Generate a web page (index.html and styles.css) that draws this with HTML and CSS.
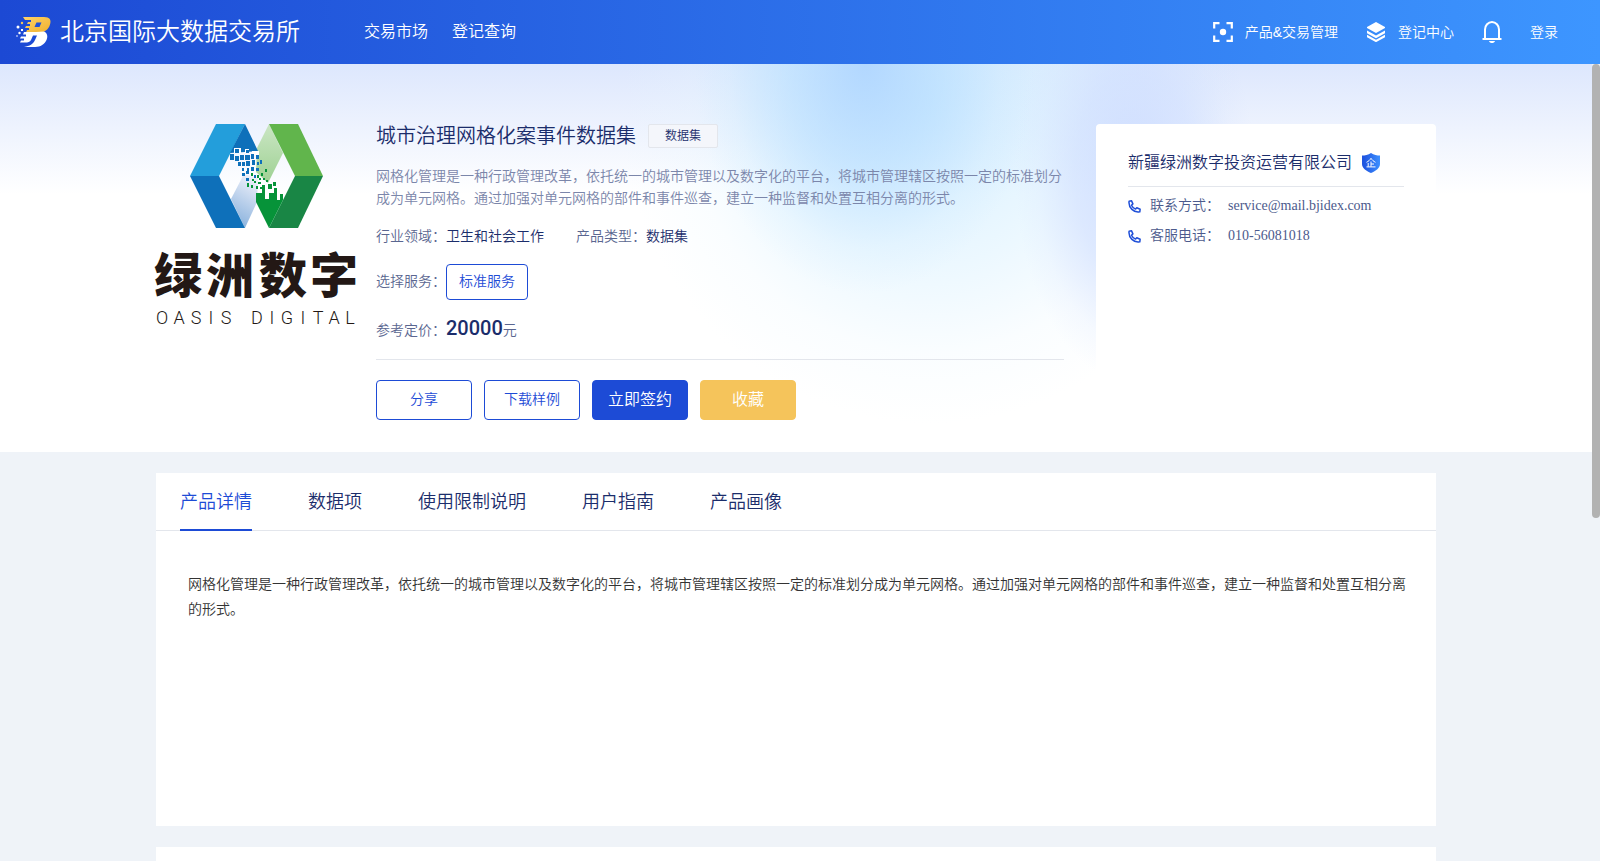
FILE: index.html
```html
<!DOCTYPE html>
<html lang="zh-CN">
<head>
<meta charset="utf-8">
<title>北京国际大数据交易所</title>
<link rel="stylesheet" href="styles.css">
</head>
<body>
<header class="topbar">
  <a class="brand" href="#">
    <svg class="brand-mark" viewBox="0 0 36 32" aria-hidden="true">
      <defs><linearGradient id="gold" x1="0" y1="0" x2="1" y2="1"><stop offset="0" stop-color="#ffd36a"/><stop offset="1" stop-color="#f0b02c"/></linearGradient></defs>
      <path fill="url(#gold)" d="M7 1h21c6 0 7.500 3 6 7.500C32.500 14 28 16.500 23 16.500H10l1-2.500h2v-2H9l1-2h4V8h-3l1-2h3V4H9z"/>
      <path fill="#2152d8" d="M20.500 6.500h5L23.500 11h-5z"/>
      <path fill="#fff" d="M28 15.500c4 2 4 6 2 9.500-3 5-7 6-13 6H8c6-1 9-3 11-7l2-4.500h-4L15 24c-1 2-3 2.500-6 2.500H4l1-2h3v-2H4l1-2h5v-2H7l1-2.500h12z"/>
      <g fill="#fff"><circle cx="2" cy="11" r="1.500"/><circle cx="3.500" cy="17" r="1.200"/><rect x="5" y="13" width="2" height="2"/><circle cx="1" cy="20" r=".8"/></g>
      <circle cx="6" cy="7" r="1.200" fill="#f5c45b"/>
    </svg>
    <span class="brand-name">北京国际大数据交易所</span>
  </a>
  <nav class="main-nav">
    <a href="#">交易市场</a>
    <a href="#">登记查询</a>
  </nav>
  <div class="tools">
    <a class="tool" href="#">
      <svg class="tool-icon" viewBox="0 0 20 20" aria-hidden="true"><path d="M1.200 6.500V1.200h5.300M13.500 1.200h5.300v5.300M18.800 13.500v5.300h-5.300M6.500 18.800H1.200v-5.300" fill="none" stroke="#fff" stroke-width="2.200"/><circle cx="10" cy="10" r="3.200" fill="#fff"/></svg>
      <span>产品&amp;交易管理</span>
    </a>
    <a class="tool" href="#">
      <svg class="tool-icon" viewBox="0 0 20 20" aria-hidden="true"><path d="M10 0l9 5v1l-9 5-9-5V5z" fill="#fff"/><path d="M1 8.500l9 5 9-5v2.700l-9 5-9-5zM1 12.800l9 5 9-5v2.400l-9 5-9-5z" fill="#fff"/></svg>
      <span>登记中心</span>
    </a>
    <button class="bell" type="button" aria-label="消息">
      <svg viewBox="0 0 20 24" aria-hidden="true"><path d="M3 18.500V9.500a7 7.500 0 0 1 14 0v9" fill="none" stroke="#fff" stroke-width="2"/><path d="M.5 18h19v2H.5zM7 21h6c-.5 1.600-1.600 2-3 2s-2.500-.4-3-2z" fill="#fff"/></svg>
    </button>
    <a class="login" href="#">登录</a>
  </div>
</header>

<div class="viewport">
<main class="scroller">
  <section class="hero">
    <div class="wrap hero-row">
      <svg class="logo" viewBox="0 0 200 200" role="img" aria-label="绿洲数字 OASIS DIGITAL">
        <defs>
          <linearGradient id="sky" x1=".6" y1="0" x2=".3" y2="1"><stop offset="0" stop-color="#eef0fa"/><stop offset="1" stop-color="#86b0dc"/></linearGradient>
          <linearGradient id="mintTop" x1="0" y1="1" x2="0" y2="0"><stop offset="0" stop-color="#9ed193"/><stop offset="1" stop-color="#cbe6c4"/></linearGradient>
        </defs>
        <path fill="url(#sky)" d="M75 75l13-25 14 4-1 24-12 26z"/>
        <path fill="url(#mintTop)" d="M113 0l14 29-15 30-12-11 1-24z"/>
        <path fill="#239edb" d="M60 0h29L63 52H34z"/>
        <path fill="#0e70ba" d="M34 52h29l26 52H60zM89 0l13 27-28 2z"/>
        <path fill="#61b54c" d="M113 0h29l25 52h-28z"/>
        <path fill="#198645" d="M139 52h28l-25 52h-29z"/>
        <path fill="#069339" d="M100 69h6v-8h3v14h4v-6h5v-5h3v12h3v-6h3v6l-14 28-13-26z"/>
        <g fill="#fff"><path d="M78 24h7v5h-7zM89 25h4v4h-4zM96 27h7v4h-7z"/></g>
        <g fill="#0e70ba">
          <path d="M79 25h4v4h-4zM90 26h3v3h-3zM74 30h4v6h-4zM79 32h4v5h-4zM84 31h4v5h-4zM89 31h5v5h-5zM95 30h3v5h-3zM100 31h3v4h-3zM82 38h3v4h-3zM86 38h3v4h-3zM90 37h4v5h-4zM96 36h3v5h-3zM101 38h2v3h-2zM86 44h2v3h-2zM91 44h2v3h-2zM95 43h3v4h-3zM100 44h3v3h-3zM86 49h3v3h-3zM90 47h3v3h-3zM98 51h2v3h-2zM90 54h3v3h-3zM104 36h2v4h-2z"/>
        </g>
        <g fill="#069339">
          <path d="M95 49h2v3h-2zM105 49h2v3h-2zM109 45h2v3h-2zM101 51h2v3h-2zM96 55h2v2h-2zM98 57h2v2h-2zM102 58h3v2h-3zM107 54h2v2h-2zM91 59h2v4h-2zM95 61h2v3h-2zM100 62h2v3h-2zM104 63h2v2h-2zM112 60h4v5h-4zM117 58h3v4h-3zM103 54h2v2h-2zM110 56h2v2h-2z"/>
        </g>
        <text class="logo-cn" x="22 74 127 178" y="169">绿洲数字</text>
        <text class="logo-en" x="6 23 40 55 70 85 101 116 131 147 162 178 194" y="200">OASIS DIGITAL</text>
      </svg>

      <div class="info">
        <div class="title-row">
          <h1 class="title">城市治理网格化案事件数据集</h1>
          <span class="tag">数据集</span>
        </div>
        <p class="desc">网格化管理是一种行政管理改革，依托统一的城市管理以及数字化的平台，将城市管理辖区按照一定的标准划分成为单元网格。通过加强对单元网格的部件和事件巡查，建立一种监督和处置互相分离的形式。</p>
        <div class="meta">
          <div>行业领域：<span class="meta-value">卫生和社会工作</span></div>
          <div>产品类型：<span class="meta-value">数据集</span></div>
        </div>
        <div class="service"><span>选择服务：</span><button class="btn-service" type="button">标准服务</button></div>
        <div class="price">参考定价：<strong class="amount">20000</strong>元</div>
        <div class="actions">
          <button class="btn" type="button">分享</button>
          <button class="btn" type="button">下载样例</button>
          <button class="btn btn-primary" type="button">立即签约</button>
          <button class="btn btn-gold" type="button">收藏</button>
        </div>
      </div>

      <aside class="vendor">
        <h2 class="vendor-name">
          <span>新疆绿洲数字投资运营有限公司</span>
          <svg class="shield" viewBox="0 0 18 20" aria-hidden="true">
            <defs><linearGradient id="shieldFill"><stop offset=".1" stop-color="#1f55e0"/><stop offset="1" stop-color="#3d90ff"/></linearGradient></defs>
            <path fill="url(#shieldFill)" d="M9 0c3 2 6 2.500 9 2.500V11c0 4-4 7-9 9-5-2-9-5-9-9V2.500C3 2.500 6 2 9 0z"/>
            <path d="M4.500 9.300C6.500 8.300 8 7 9 5.300c1 1.700 2.500 3 4.500 4M9 8.500v5.200M9 11h3M6.200 10v3.700M4.500 13.900h9" fill="none" stroke="#fff"/>
          </svg>
        </h2>
        <dl class="contacts">
          <div class="contact">
            <dt><svg class="phone" viewBox="0 0 12 12" aria-hidden="true"><path d="M1 1.200L3.300.8l1.200 2.800-1.300 1.200c.8 1.700 2 2.800 3.700 3.600L8.100 7.200l3.100 1.300-.3 2.400C5.500 12 .2 7 1 1.200z" fill="none" stroke="#1f4fd8" stroke-width="1.400" stroke-linejoin="round"/></svg>联系方式：</dt>
            <dd>service@mail.bjidex.com</dd>
          </div>
          <div class="contact">
            <dt><svg class="phone" viewBox="0 0 12 12" aria-hidden="true"><path d="M1 1.200L3.300.8l1.200 2.800-1.300 1.200c.8 1.700 2 2.800 3.700 3.600L8.100 7.200l3.100 1.300-.3 2.400C5.500 12 .2 7 1 1.200z" fill="none" stroke="#1f4fd8" stroke-width="1.400" stroke-linejoin="round"/></svg>客服电话：</dt>
            <dd>010-56081018</dd>
          </div>
        </dl>
      </aside>
    </div>
  </section>

  <section class="wrap panel">
    <nav class="tabs">
      <button class="tab tab-active" type="button">产品详情</button>
      <button class="tab" type="button">数据项</button>
      <button class="tab" type="button">使用限制说明</button>
      <button class="tab" type="button">用户指南</button>
      <button class="tab" type="button">产品画像</button>
    </nav>
    <p class="detail">网格化管理是一种行政管理改革，依托统一的城市管理以及数字化的平台，将城市管理辖区按照一定的标准划分成为单元网格。通过加强对单元网格的部件和事件巡查，建立一种监督和处置互相分离的形式。</p>
  </section>
  <section class="wrap panel panel-next"></section>
</main>
<div class="rail" aria-hidden="true"><div class="thumb"></div></div>
</div>
</body>
</html>
```
FILE: styles.css
```css
* { box-sizing: border-box; margin: 0; padding: 0; }

body {
  display: flex;
  flex-direction: column;
  height: 100vh;
  font-family: "Liberation Serif", "Noto Sans CJK SC", serif;
  font-size: 14px;
  font-weight: 350;
  color: #1b2d6b;
  background: #eff3f8;
}

a { color: inherit; text-decoration: none; }
button { font: inherit; color: inherit; border: 0; background: none; cursor: pointer; }

.topbar {
  display: flex;
  align-items: center;
  flex: none;
  height: 64px;
  padding: 0 42px 0 16px;
  color: #fff;
  font-family: "Liberation Sans", "Noto Sans CJK SC", sans-serif;
  line-height: 20px;
  background: linear-gradient(90deg, #1c49d4, #3d96ff);
}
.brand { display: flex; align-items: center; gap: 8px; }
.brand-mark { width: 36px; height: 32px; }
.brand-name { font-size: 24px; line-height: 32px; }
.main-nav { display: flex; gap: 24px; margin-left: 64px; font-size: 16px; }
.tools { display: flex; align-items: center; gap: 28px; margin-left: auto; }
.tool { display: flex; align-items: center; gap: 12px; }
.tool-icon { width: 20px; height: 20px; }
.bell { width: 20px; height: 24px; }
.bell svg { display: block; width: 100%; height: 100%; }
.login { display: block; }

.viewport { display: flex; flex: 1; min-height: 0; }
.scroller { flex: 1; min-width: 0; overflow-y: auto; scrollbar-width: none; }
.rail { flex: none; width: 8px; }
.thumb { height: 57%; border-radius: 4px; background: #b2b2b2; }

.wrap { max-width: 1280px; margin: 0 auto; }

.hero {
  padding: 60px 0 32px;
  background:
    radial-gradient(170px 230px at 865px 0, rgba(172, 212, 255, .85), rgba(180, 220, 255, .55) 45%, rgba(190, 226, 255, .15) 80%, rgba(190, 226, 255, 0)),
    radial-gradient(120px 210px at 1135px 110px, rgba(204, 219, 255, .9), rgba(206, 221, 255, .6) 50%, rgba(208, 222, 255, .15) 82%, rgba(208, 222, 255, 0)),
    radial-gradient(310px 320px at 930px 40px, rgba(208, 236, 255, .9), rgba(220, 242, 255, .55) 50%, rgba(230, 246, 255, .2) 78%, rgba(230, 246, 255, 0)),
    linear-gradient(#dde7fd, #fff 130px);
}
.hero-row { display: flex; align-items: stretch; }
.logo { flex: none; width: 200px; height: 200px; overflow: visible; }
.logo-cn { font: 900 48px "Noto Sans CJK SC", sans-serif; fill: #231815; text-anchor: middle; }
.logo-en { font: 300 18px Roboto, sans-serif; fill: #231815; text-anchor: middle; }

.info { flex: 1; min-width: 0; margin: 0 32px 0 20px; color: #5a6690; }
.title-row { display: flex; align-items: center; gap: 12px; }
.title { font-size: 20px; font-weight: 350; line-height: 24px; color: #1b2d6b; }
.tag {
  padding: 0 16px;
  border: 1px solid #e3e6ec;
  border-radius: 2px;
  font-size: 12px;
  line-height: 22px;
  color: #1b2d6b;
  background: #f4f6fb;
}
.desc { margin-top: 18px; line-height: 22px; color: #7b86aa; }
.meta { display: flex; gap: 32px; margin-top: 16px; line-height: 22px; }
.meta-value { color: #1b2d6b; }
.service { display: flex; align-items: center; margin-top: 16px; line-height: 20px; }
.btn-service { height: 36px; padding: 0 12px; border: 1px solid #1d4bd6; border-radius: 4px; color: #1d4bd6; background: #fff; }
.price { margin-top: 16px; padding-bottom: 16px; border-bottom: 1px solid #e3e6ec; line-height: 24px; }
.amount { font: 500 20px/24px Roboto, sans-serif; color: #1b2d6b; }
.actions { display: flex; gap: 12px; margin-top: 20px; }
.btn { width: 96px; height: 40px; border: 1px solid #1d4bd6; border-radius: 4px; line-height: 20px; color: #1d4bd6; background: #fff; }
.btn-primary { font-size: 16px; color: #fff; background: #1d4bd6; }
.btn-gold { font-size: 16px; color: #fff; border-color: #f5c45b; background: #f5c45b; }

.vendor { flex: none; width: 340px; padding: 27px 32px; border-radius: 4px; background: #fff; }
.vendor-name {
  display: flex;
  align-items: center;
  gap: 10px;
  padding-bottom: 11px;
  border-bottom: 1px solid #e3e6ec;
  font-size: 16px;
  font-weight: 350;
  line-height: 24px;
}
.shield { width: 18px; height: 20px; }
.contacts { margin-top: 8px; color: #4c5a8c; }
.contact { display: flex; gap: 8px; margin-bottom: 8px; line-height: 22px; }
.contact dt { display: flex; align-items: center; gap: 9px; }
.phone { width: 13px; height: 13px; }

.panel { margin-top: 21px; min-height: 353px; background: #fff; }
.tabs { display: flex; gap: 56px; padding: 0 24px; border-bottom: 1px solid #e3e6ec; }
.tab { height: 58px; margin-bottom: -1px; padding-top: 2px; border-bottom: 2px solid transparent; font-size: 18px; line-height: 24px; }
.tab-active { color: #1d4bd6; border-color: #1d4bd6; }
.detail { padding: 41px 24px 0 32px; line-height: 25px; color: #333; }
.panel-next { min-height: 546px; }
```
